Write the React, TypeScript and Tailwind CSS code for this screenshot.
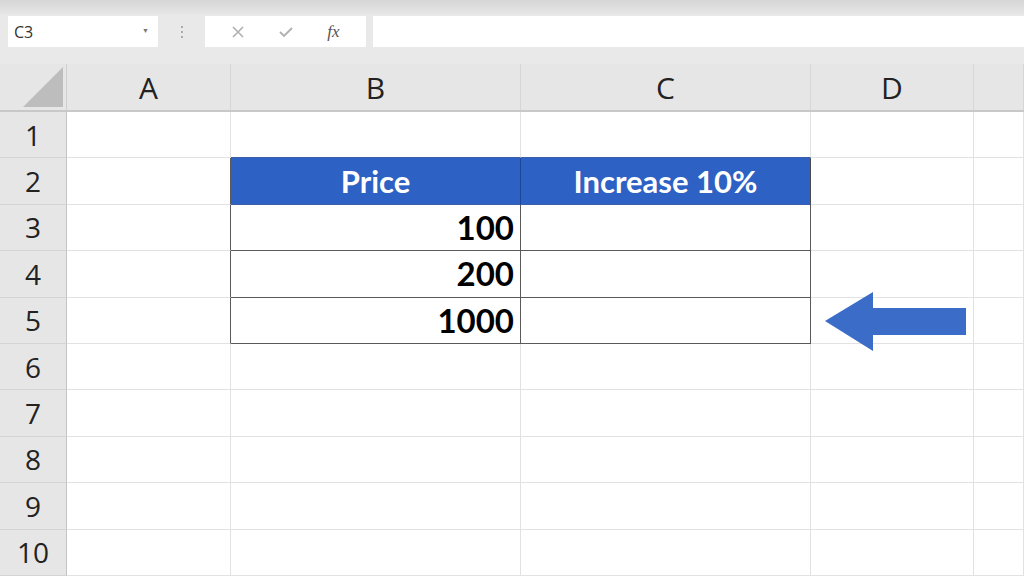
import React from "react";

const COLS = ["A", "B", "C", "D", ""];
const COL_W = ["w-[164px]", "w-[290px]", "w-[290px]", "w-[163px]", "flex-1"];
const ROWS = [1, 2, 3, 4, 5, 6, 7, 8, 9, 10];

const values: Record<number, string> = { 3: "100", 4: "200", 5: "1000" };

const cellClass = (row: number, col: number) => {
  const inTable = row >= 2 && row <= 5 && (col === 1 || col === 2);
  const leftOfTable = row >= 2 && row <= 5 && col === 0;
  const aboveTable = row === 1 && (col === 1 || col === 2);
  let cls = "h-full border-r border-b ";
  if (inTable && row === 2) {
    cls += col === 1 ? "bg-[#2d61c4] border-r-[#1d4599] border-b-[#3b5ea8] " : "bg-[#2d61c4] border-r-[#4a4a4a] border-b-[#3b5ea8] ";
  } else if (inTable) {
    cls += "bg-white border-r-[#5a5a5a] border-b-[#5a5a5a] ";
  } else if (leftOfTable) {
    cls += "bg-white border-r-[#5a5a5a] border-b-[#e2e2e2] ";
  } else if (aboveTable) {
    cls += "bg-white border-r-[#e2e2e2] border-b-[#3b5ea8] ";
  } else {
    cls += "bg-white border-r-[#e2e2e2] border-b-[#e2e2e2] ";
  }
  return cls;
};

const App: React.FC = () => {
  return (
    <div className="w-[1024px] h-[576px] overflow-hidden bg-[#e9e9e9] font-['Open_Sans',sans-serif] text-[#222]">
      {/* title strip */}
      <div className="h-[14px] bg-gradient-to-b from-[#d6d6d6] to-[#e6e6e6]" />

      {/* formula bar */}
      <div className="flex items-start h-[36px] pt-[2px]">
        <div className="ml-[8px] w-[150px] h-[31px] bg-white flex items-center justify-between pl-[6px] pr-[9px]">
          <span className="text-[16px] text-[#333]">C3</span>
          <span className="text-[7px] text-[#777]">▼</span>
        </div>
        <div className="w-[47px] h-[31px] flex flex-col items-center justify-center gap-[3px]">
          <span className="w-[2px] h-[2px] bg-[#aaa]" />
          <span className="w-[2px] h-[2px] bg-[#aaa]" />
          <span className="w-[2px] h-[2px] bg-[#aaa]" />
        </div>
        <div className="w-[161px] h-[31px] bg-white flex items-center justify-around px-[10px]">
          <svg width="14" height="14" viewBox="0 0 14 14">
            <path d="M2 2 L12 12 M12 2 L2 12" stroke="#b0b0b0" strokeWidth="1.6" />
          </svg>
          <svg width="16" height="14" viewBox="0 0 16 14">
            <path d="M2 7 L6 11 L14 3" stroke="#b0b0b0" strokeWidth="1.8" fill="none" />
          </svg>
          <span className="font-['Liberation_Serif',serif] italic text-[17px] text-[#555]">fx</span>
        </div>
        <div className="ml-[7px] flex-1 h-[31px] bg-white" />
      </div>

      {/* column headers */}
      <div className="h-[14px]" />
      <div className="flex h-[48px] bg-[#e6e6e6] border-b-2 border-b-[#c8c8c8]">
        <div className="w-[67px] h-full relative border-r border-r-[#cfcfcf]">
          <svg className="absolute right-[3px] bottom-[3px]" width="40" height="40" viewBox="0 0 40 40">
            <path d="M40 0 L40 40 L0 40 Z" fill="#bdbdbd" />
          </svg>
        </div>
        {COLS.map((c, i) => (
          <div
            key={i}
            className={`${COL_W[i]} h-full flex items-center justify-center text-[30px] border-r border-r-[#d6d6d6]`}
          >
            {c}
          </div>
        ))}
      </div>

      {/* grid */}
      <div className="relative">
        {ROWS.map((r) => (
          <div key={r} className="flex h-[46.4px]">
            <div className="w-[67px] h-full flex items-center justify-center bg-[#e6e6e6] border-r border-r-[#c4c4c4] border-b border-b-[#d4d4d4] text-[28px]">
              {r}
            </div>
            {COLS.map((_, ci) => (
              <div key={ci} className={`${COL_W[ci]} ${cellClass(r, ci)} flex items-center`}>
                {r === 2 && ci === 1 && (
                  <span className="w-full text-center text-white font-bold text-[31px] font-['Lato',sans-serif]">
                    Price
                  </span>
                )}
                {r === 2 && ci === 2 && (
                  <span className="w-full text-center text-white font-bold text-[31px] font-['Lato',sans-serif]">
                    Increase 10%
                  </span>
                )}
                {ci === 1 && values[r] && (
                  <span className="w-full text-right pr-[6px] text-black font-bold text-[33px] font-['Lato',sans-serif]">
                    {values[r]}
                  </span>
                )}
              </div>
            ))}
          </div>
        ))}

        {/* arrow annotation */}
        <svg className="absolute left-[824px] top-[179px]" width="144" height="62" viewBox="0 0 144 62">
          <path d="M1 30 L49 1 L49 17 L142 17 L142 44 L49 44 L49 60 Z" fill="#3a6cc8" />
        </svg>
      </div>
    </div>
  );
};

export default App;
